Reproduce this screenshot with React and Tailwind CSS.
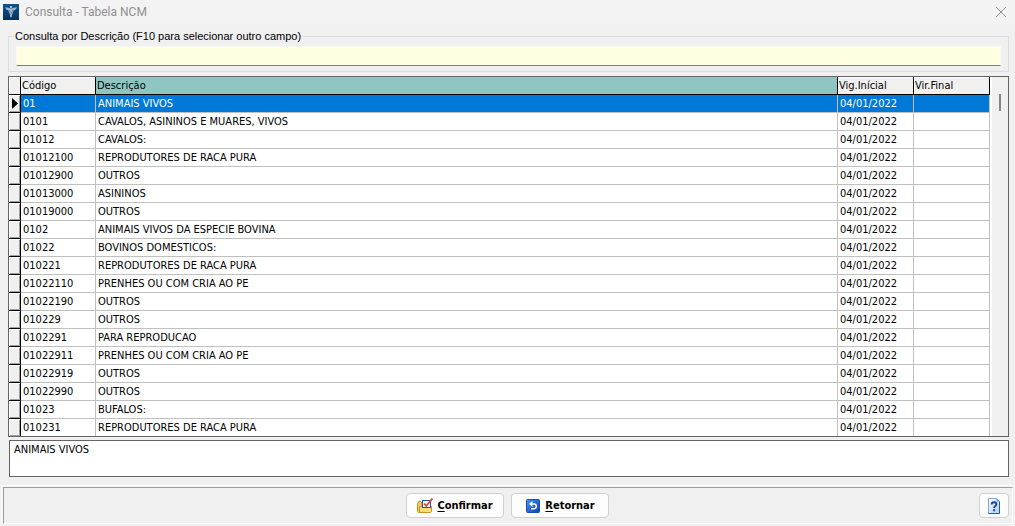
import { useState } from 'react';

const rows = [
  { code: '01', description: 'ANIMAIS VIVOS' },
  { code: '0101', description: 'CAVALOS, ASININOS E MUARES, VIVOS' },
  { code: '01012', description: 'CAVALOS:' },
  { code: '01012100', description: 'REPRODUTORES DE RACA PURA' },
  { code: '01012900', description: 'OUTROS' },
  { code: '01013000', description: 'ASININOS' },
  { code: '01019000', description: 'OUTROS' },
  { code: '0102', description: 'ANIMAIS VIVOS DA ESPECIE BOVINA' },
  { code: '01022', description: 'BOVINOS DOMESTICOS:' },
  { code: '010221', description: 'REPRODUTORES DE RACA PURA' },
  { code: '01022110', description: 'PRENHES OU COM CRIA AO PE' },
  { code: '01022190', description: 'OUTROS' },
  { code: '010229', description: 'OUTROS' },
  { code: '0102291', description: 'PARA REPRODUCAO' },
  { code: '01022911', description: 'PRENHES OU COM CRIA AO PE' },
  { code: '01022919', description: 'OUTROS' },
  { code: '01022990', description: 'OUTROS' },
  { code: '01023', description: 'BUFALOS:' },
  { code: '010231', description: 'REPRODUTORES DE RACA PURA' },
];

const AppIcon = () => (
  <svg className="h-4 w-4 shrink-0" viewBox="0 0 16 16" aria-hidden="true">
    <defs>
      <linearGradient id="app-bg" x1="0" y1="0" x2="0" y2="1">
        <stop offset="0" stopColor="#0f548c" />
        <stop offset="1" stopColor="#07325e" />
      </linearGradient>
    </defs>
    <rect width="16" height="16" fill="url(#app-bg)" />
    <path d="M2 3.2 6.4 4l1.1 1.2h1L9.6 4 14 3.2 12.6 5.6 9.4 6.8h-2.8L3.4 5.6Z" fill="#9db9cd" />
    <path d="M5.2 6.6h5.6L9.6 9.4 8.6 12.6 8 14l-.6-1.4L6.4 9.4Z" fill="#7fa3bd" />
    <circle cx="8" cy="3" r="1" fill="#dbe7ef" />
    <path d="M7 7.6 9 8.8 7.2 10.2 8.6 11.4" stroke="#0b3c69" strokeWidth=".6" fill="none" />
    <path d="M8 4v9" stroke="#dbe7ef" strokeWidth=".7" />
  </svg>
);

const ConfirmIcon = () => (
  <svg className="h-4 w-4 shrink-0" viewBox="0 0 16 16" aria-hidden="true">
    <path d="M.5 5.5 1.5 3.5H4l1 2v9H1.5l-1-1Z" fill="#f0cb62" stroke="#c08e22" />
    <path d="M2.5 8.5h12v5l-1 1h-11Z" fill="#f8dc7c" stroke="#c4932a" />
    <rect x="5.5" y="2.5" width="8" height="7" fill="#fff" stroke="#1f4fb5" />
    <path d="M7 5.5 9.2 8l6.2-7.4" fill="none" stroke="#f03a1c" strokeWidth="1.7" />
  </svg>
);

const ReturnIcon = () => (
  <svg className="h-4 w-4 shrink-0" viewBox="0 0 16 16" aria-hidden="true">
    <defs>
      <linearGradient id="return-bg" x1="0" y1="0" x2="1" y2="1">
        <stop offset="0" stopColor="#4a90ec" />
        <stop offset="1" stopColor="#0a46b0" />
      </linearGradient>
    </defs>
    <rect x="1.5" y="1.5" width="13" height="13" rx="1" fill="url(#return-bg)" stroke="#1450b4" />
    <path d="M4 6 7.4 3v2.2H9c2 0 3 1.3 3 3s-1 3.2-3 3.2H6V10h3c.9 0 1.5-.7 1.5-1.8S9.9 6.7 9 6.7H7.4V9Z" fill="#fff" />
  </svg>
);

const HelpIcon = () => (
  <svg className="h-4 w-4 shrink-0" viewBox="0 0 16 16" aria-hidden="true">
    <defs>
      <linearGradient id="help-bg" x1="0" y1="0" x2="1" y2="1">
        <stop offset="0" stopColor="#ffffff" />
        <stop offset="1" stopColor="#a9cdf6" />
      </linearGradient>
    </defs>
    <path d="M2.5.5h8l3 3v12h-11Z" fill="url(#help-bg)" stroke="#7fa8dc" />
    <path d="M13.5 3.5v12h-11" fill="none" stroke="#2c57a0" />
    <path d="M10.5.5v3h3Z" fill="#3fa9e8" />
    <path d="M5.7 6.4C5.7 4.8 6.7 4.2 8 4.2s2.4.7 2.4 2.1c0 1.6-2.3 1.6-2.3 3.7" fill="none" stroke="#1c3f9c" strokeWidth="1.9" />
    <rect x="7.1" y="11.2" width="2" height="2" fill="#1c3f9c" />
  </svg>
);

const headerCell =
  'h-[18px] truncate border-r border-b border-black bg-[#f0f0f0] px-px pt-px pb-0 text-left font-normal shadow-[inset_1px_1px_0_#fff]';

const ActionButton = ({ icon, label }) => (
  <button
    type="button"
    className="flex h-[25px] w-[98px] items-center justify-center gap-1 rounded border border-[#d0d0d0] bg-[#fdfdfd] text-[11px] leading-4 font-bold text-black"
  >
    {icon}
    <span>
      <span className="underline underline-offset-2">{label[0]}</span>
      {label.slice(1)}
    </span>
  </button>
);

const NcmRow = ({ row, selected, last, onSelect }) => {
  const line = last ? '' : 'border-b';
  const height = last ? 'h-[17px]' : 'h-[18px]';
  const cell = `${height} ${line} truncate border-r border-[#c0c0c0] px-0.5 pt-px pb-0`;

  return (
    <tr onClick={onSelect} className={selected ? 'bg-[#0078d7] text-white' : 'bg-white'}>
      <td className={`${height} ${line} border-r border-black bg-[#f0f0f0] p-0 shadow-[inset_1px_1px_0_#fff,inset_-1px_-1px_0_#a0a0a0]`}>
        {selected && (
          <svg className="ml-[3px] h-[11px] w-1.5" viewBox="0 0 6 11" aria-hidden="true">
            <path d="M0 0v11l6-5.5Z" fill="#000" />
          </svg>
        )}
      </td>
      <td className={cell}>{row.code}</td>
      <td className={cell}>{row.description}</td>
      <td className={cell}>04/01/2022</td>
      <td className={cell}></td>
    </tr>
  );
};

const App = () => {
  const [selected, setSelected] = useState(0);
  const [query, setQuery] = useState('');

  return (
    <div className="flex min-h-screen flex-col bg-[#f0f0f0] font-['DejaVu_Sans_Condensed','DejaVu_Sans',sans-serif] text-[11px] leading-4 text-black">
      <header className="flex h-6 items-center gap-1.5 bg-[#f3f3f3] pr-2 pl-[3px]">
        <AppIcon />
        <h1 className="flex-1 font-[Roboto,sans-serif] text-xs text-[#8f8f8f]">Consulta - Tabela NCM</h1>
        <button type="button" aria-label="Fechar" className="text-[#8f8f8f]">
          <svg className="h-3 w-3" viewBox="0 0 12 12" fill="none" stroke="currentColor">
            <path d="M1 1l10 10M11 1 1 11" />
          </svg>
        </button>
      </header>

      <main className="flex flex-1 flex-col pt-1 pr-1.5 pl-2">
        <fieldset className="border border-[#dcdcdc] px-[7px] pt-0.5 pb-[5px]">
          <legend className="-ml-0.5 px-px font-['Liberation_Sans',sans-serif]">
            <label htmlFor="query">Consulta por Descrição (F10 para selecionar outro campo)</label>
          </legend>
          <input
            id="query"
            type="text"
            value={query}
            onChange={(e) => setQuery(e.target.value)}
            className="block h-5 w-full border border-[#f8f8f8] border-b-[#808080] bg-[#ffffe1] px-1 outline-none"
          />
        </fieldset>

        <div className="mt-1 flex border border-[#646464] bg-white">
          <table className="flex-1 table-fixed border-separate border-spacing-0">
            <colgroup>
              <col className="w-3" />
              <col className="w-[75px]" />
              <col />
              <col className="w-[76px]" />
              <col className="w-[76px]" />
            </colgroup>
            <thead>
              <tr>
                <th className={headerCell} aria-label="Linha atual"></th>
                <th className={headerCell}>Código</th>
                <th className="h-[18px] truncate border-r border-b border-black bg-[#8fc6c4] px-px pt-px pb-0 text-left font-normal">Descrição</th>
                <th className={headerCell}>Vig.Inícial</th>
                <th className={headerCell}>Vir.Final</th>
              </tr>
            </thead>
            <tbody>
              {rows.map((row, i) => (
                <NcmRow
                  key={row.code}
                  row={row}
                  selected={i === selected}
                  last={i === rows.length - 1}
                  onSelect={() => setSelected(i)}
                />
              ))}
            </tbody>
          </table>
          <div className="ml-0.5 w-4 bg-[#f0f0f0] pt-[17px]">
            <div className="mx-auto h-[17px] w-0.5 bg-[#868686]" />
          </div>
        </div>

        <textarea
          readOnly
          aria-label="Descrição completa"
          value={rows[selected].description}
          className="mt-[3px] ml-px block h-[37px] resize-none border border-[#646464] bg-white px-1 pt-px outline-none"
        />
      </main>

      <footer className="mx-px mt-2 mb-0.5 border-t border-l border-white pt-px pr-px pl-px">
        <div className="flex h-[37px] items-center border border-t-[#a0a0a0] border-r-white border-b-white border-l-[#a0a0a0] pr-[3px]">
          <div className="w-8" />
          <div className="flex flex-1 justify-center gap-[7px]">
            <ActionButton icon={<ConfirmIcon />} label="Confirmar" />
            <ActionButton icon={<ReturnIcon />} label="Retornar" />
          </div>
          <button
            type="button"
            aria-label="Ajuda"
            className="flex h-[25px] w-[30px] items-center justify-center rounded border border-[#d0d0d0] bg-[#fdfdfd]"
          >
            <HelpIcon />
          </button>
        </div>
      </footer>
    </div>
  );
};

export default App;
